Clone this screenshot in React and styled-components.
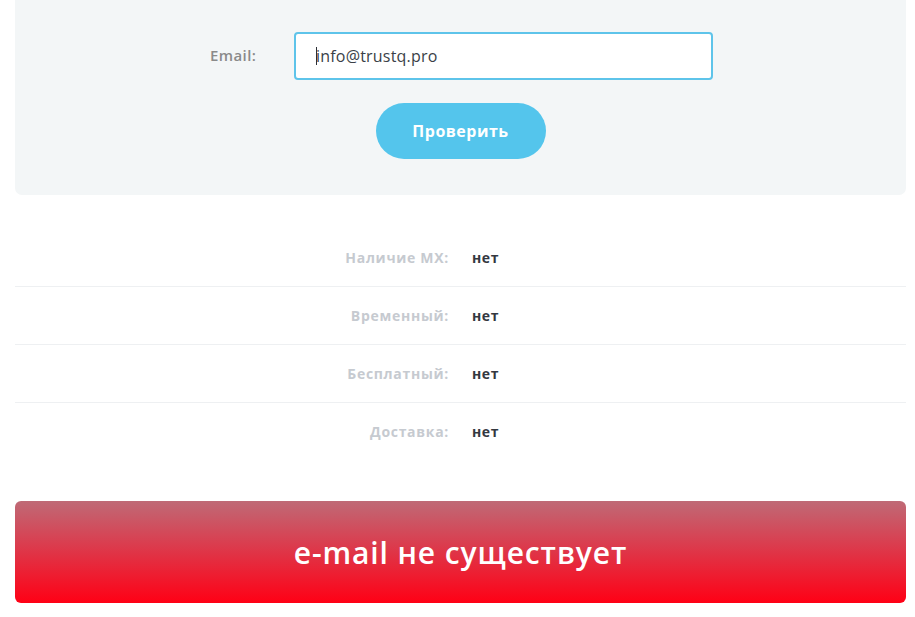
import React from "react";
import styled, { createGlobalStyle } from "styled-components";

const Global = createGlobalStyle`
  html, body { margin: 0; padding: 0; background: #ffffff; }
  body { font-family: "Open Sans", "Liberation Sans", sans-serif; }
  * { box-sizing: border-box; }
`;

const Page = styled.div`
  width: 915px;
  padding: 0 9px 0 15px;
  display: flex;
  flex-direction: column;
`;

const Panel = styled.section`
  background: #f3f6f7;
  border-radius: 0 0 7px 7px;
  padding: 32px 0 36px;
  display: flex;
  flex-direction: column;
  align-items: center;
  gap: 23px;
`;

const FormRow = styled.div`
  display: flex;
  align-items: center;
  gap: 37px;
  padding-left: 2px;
`;

const Label = styled.label`
  width: 47px;
  font-size: 15px;
  font-weight: 600;
  letter-spacing: 0.4px;
  color: #8a8a8a;
  margin-top: -2px;
  white-space: nowrap;
`;

const InputBox = styled.div`
  width: 419px;
  height: 48px;
  background: #fff;
  border: 2px solid #5ec4ea;
  border-radius: 4px;
  display: flex;
  align-items: center;
  padding-left: 20px;
  font-size: 16px;
  letter-spacing: 0.2px;
  color: #3a3f47;
`;

const Caret = styled.span`
  display: inline-block;
  width: 1px;
  height: 18px;
  background: #2b2f36;
  margin-right: -1px;
`;

const CheckButton = styled.button`
  width: 170px;
  height: 56px;
  border: none;
  border-radius: 28px;
  background: #54c5ec;
  color: #fff;
  font-family: inherit;
  font-size: 16px;
  font-weight: 700;
  letter-spacing: 0.5px;
  cursor: pointer;
`;

const Results = styled.div`
  margin-top: 33px;
  display: flex;
  flex-direction: column;
`;

const ResultRow = styled.div`
  display: grid;
  grid-template-columns: 1fr 1fr;
  column-gap: 23px;
  align-items: center;
  height: 58px;
  border-top: ${(p) => (p.$first ? "none" : "1px solid #eef0f2")};
`;

const Key = styled.span`
  text-align: right;
  font-size: 14px;
  font-weight: 700;
  letter-spacing: 0.7px;
  color: #c6cad0;
`;

const Value = styled.span`
  font-size: 14px;
  font-weight: 700;
  letter-spacing: 0.6px;
  color: #34383f;
`;

const Banner = styled.div`
  margin-top: 41px;
  height: 102px;
  border-radius: 6px;
  background: linear-gradient(to bottom, #bf6a76 0%, #dc3a4c 45%, #ff0015 100%);
  display: flex;
  align-items: center;
  justify-content: center;
  color: #fff;
  font-size: 30px;
  font-weight: 600;
  letter-spacing: 0.9px;
`;

const rows = [
  ["Наличие MX:", "нет"],
  ["Временный:", "нет"],
  ["Бесплатный:", "нет"],
  ["Доставка:", "нет"],
];

export default function App() {
  return (
    <>
      <Global />
      <Page>
        <Panel>
          <FormRow>
            <Label>Email:</Label>
            <InputBox>
              <Caret />
              info@trustq.pro
            </InputBox>
          </FormRow>
          <CheckButton>Проверить</CheckButton>
        </Panel>
        <Results>
          {rows.map(([k, v], i) => (
            <ResultRow key={k} $first={i === 0}>
              <Key>{k}</Key>
              <Value>{v}</Value>
            </ResultRow>
          ))}
        </Results>
        <Banner>e-mail не существует</Banner>
      </Page>
    </>
  );
}
